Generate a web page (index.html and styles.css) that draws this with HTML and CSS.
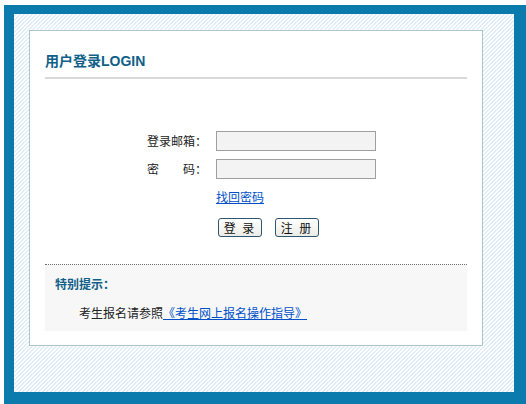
FILE: index.html
```html
<!DOCTYPE html>
<html lang="zh-CN">
<head>
<meta charset="utf-8">
<title>用户登录</title>
<link rel="stylesheet" href="styles.css">
</head>
<body>
<div class="frame">
  <div class="panel">
    <h2 class="title">用户登录LOGIN</h2>
    <form class="login">
      <div class="row">
        <label class="label">登录邮箱：</label>
        <input class="field" type="text">
      </div>
      <div class="row">
        <label class="label">密&#12288;&#12288;码：</label>
        <input class="field" type="password">
      </div>
      <div class="row link-row">
        <a class="link" href="#">找回密码</a>
      </div>
      <div class="row btn-row">
        <button class="btn" type="button">登 录</button>
        <button class="btn" type="button">注 册</button>
      </div>
    </form>
    <div class="notice">
      <div class="notice-title">特别提示：</div>
      <div class="notice-text">考生报名请参照<a class="link" href="#">《考生网上报名操作指导》</a></div>
    </div>
  </div>
</div>
</body>
</html>
```
FILE: styles.css
```css
html, body {
  margin: 0;
  padding: 0;
  background: #ffffff;
}
body {
  font-family: "Noto Sans CJK SC", "Liberation Sans", sans-serif;
  font-size: 12px;
  color: #222222;
}
.frame {
  margin: 5px 0 0 4px;
  border-style: solid;
  border-color: #0b7bad;
  border-width: 9px 12px 12px 10px;
  padding: 16px 31px 46px 15px;
  background-color: #ffffff;
  background-image: repeating-linear-gradient(-45deg, #ffffff 0, #ffffff 1.6px, #e2eefa 1.6px, #e2eefa 2.83px);
  height: 316px;
}
.panel {
  box-sizing: border-box;
  height: 316px;
  background: #ffffff;
  border: 1px solid #abc7d4;
  padding: 0 15px;
}
.title {
  margin: 22px 0 0 0;
  padding-bottom: 8px;
  border-bottom: 2px solid #d9d9d9;
  font-family: "Liberation Sans", "Noto Sans CJK SC", sans-serif;
  font-size: 14px;
  line-height: 16px;
  font-weight: bold;
  color: #0f6088;
}
.login {
  margin: 52px 0 0 0;
}
.row {
  display: flex;
  align-items: center;
  padding-left: 102px;
  height: 20px;
  margin-bottom: 8px;
}
.label {
  width: 62px;
  line-height: 20px;
  text-align: left;
  margin-right: 7px;
  color: #222222;
}
.field {
  box-sizing: border-box;
  width: 160px;
  height: 20px;
  margin: 0;
  border: 1px solid #9f9f9f;
  background: #f3f3f3;
  padding: 0 3px;
}
.link-row {
  padding-left: 171px;
  margin-top: 10px;
  height: 16px;
  margin-bottom: 13px;
}
.link {
  color: #0050c8;
  text-decoration: underline;
  line-height: 16px;
}
.btn-row {
  padding-left: 173px;
  height: 19px;
  margin-bottom: 0;
}
.btn {
  box-sizing: border-box;
  width: 44px;
  height: 19px;
  margin: 0 13px 0 0;
  padding: 0;
  border: 1px solid #2d5673;
  border-radius: 3px;
  background: linear-gradient(#ffffff, #ebebe6);
  font-family: "Noto Sans CJK SC", sans-serif;
  font-size: 12px;
  line-height: 17px;
  color: #111111;
  letter-spacing: 2px;
}
.notice {
  margin-top: 27px;
  height: 66px;
  border-top: 1px dotted #6f6f6f;
  background: #f7f7f7;
  padding-left: 10px;
}
.notice-title {
  padding-top: 11px;
  line-height: 16px;
  font-weight: bold;
  color: #0f6088;
}
.notice-text {
  margin-top: 13px;
  padding-left: 24px;
  line-height: 16px;
  color: #222222;
}
```
